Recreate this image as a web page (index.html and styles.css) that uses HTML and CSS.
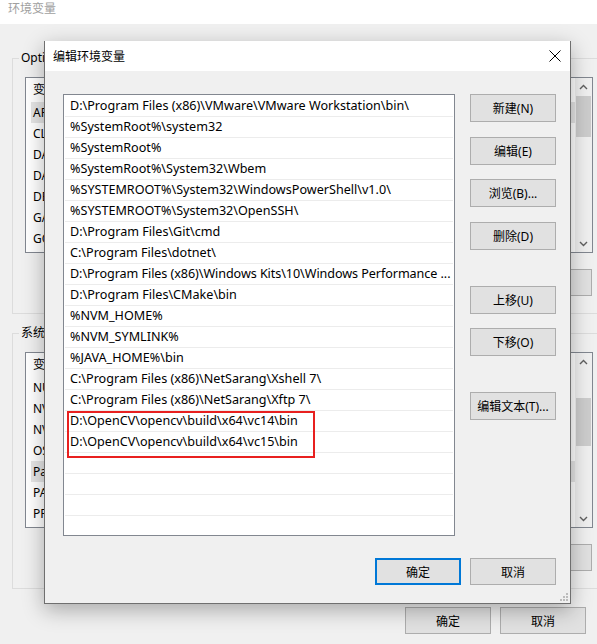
FILE: index.html
```html
<!DOCTYPE html>
<html lang="zh-CN">
<head>
    <meta charset="UTF-8">
    <title>环境变量</title>
    <link rel="stylesheet" href="styles.css">
</head>
<body>
    <!-- Hintergrundfenster: Umgebungsvariablen -->
    <div class="window">
        <div class="win-title">环境变量</div>

        <fieldset class="group">
            <legend>Options 的用户变量(U)</legend>
            <div class="var-list">
                <div class="var-rows">
                    <div class="var-head">变量</div>
                    <div class="var-row selected">APP_HOME</div>
                    <div class="var-row">CLASSPATH</div>
                    <div class="var-row">DART_HOME</div>
                    <div class="var-row">DATA_PATH</div>
                    <div class="var-row">DEV_HOME</div>
                    <div class="var-row">GATEWAY</div>
                    <div class="var-row">GOPATH</div>
                </div>
                <div class="scrollbar">
                    <div class="sb-arrow"><svg width="9" height="6" viewBox="0 0 9 6"><polyline points="1,5 4.5,1.5 8,5" /></svg></div>
                    <div class="sb-track"><div class="sb-thumb" style="margin-top: 1px; height: 41px;"></div></div>
                    <div class="sb-arrow"><svg width="9" height="6" viewBox="0 0 9 6"><polyline points="1,1 4.5,4.5 8,1" /></svg></div>
                </div>
            </div>
            <div class="group-buttons">
                <button>新建(N)...</button>
                <button>编辑(E)...</button>
                <button>删除(D)</button>
            </div>
        </fieldset>

        <fieldset class="group second">
            <legend>系统变量(S)</legend>
            <div class="var-list">
                <div class="var-rows">
                    <div class="var-head">变量</div>
                    <div class="var-row">NUMBER_OF_PROCESSORS</div>
                    <div class="var-row">NVM_HOME</div>
                    <div class="var-row">NVM_SYMLINK</div>
                    <div class="var-row">OS</div>
                    <div class="var-row selected">Path</div>
                    <div class="var-row">PATHEXT</div>
                    <div class="var-row">PROCESSOR_ARCHITECTURE</div>
                </div>
                <div class="scrollbar">
                    <div class="sb-arrow"><svg width="9" height="6" viewBox="0 0 9 6"><polyline points="1,5 4.5,1.5 8,5" /></svg></div>
                    <div class="sb-track"><div class="sb-thumb" style="margin-top: 28px; height: 48px;"></div></div>
                    <div class="sb-arrow"><svg width="9" height="6" viewBox="0 0 9 6"><polyline points="1,1 4.5,4.5 8,1" /></svg></div>
                </div>
            </div>
            <div class="group-buttons">
                <button>新建(W)...</button>
                <button>编辑(I)...</button>
                <button>删除(L)</button>
            </div>
        </fieldset>

        <div class="win-footer">
            <button>确定</button>
            <button>取消</button>
        </div>
    </div>

    <!-- Dialog: Umgebungsvariable bearbeiten -->
    <div class="dialog">
        <div class="dlg-title">
            <span>编辑环境变量</span>
            <svg class="close" width="12" height="12" viewBox="0 0 12 12"><path d="M0.5 0.5 L11.5 11.5 M11.5 0.5 L0.5 11.5" /></svg>
        </div>
        <div class="dlg-body">
            <div class="path-list">
                <div class="path-row">D:\Program Files (x86)\VMware\VMware Workstation\bin\</div>
                <div class="path-row">%SystemRoot%\system32</div>
                <div class="path-row">%SystemRoot%</div>
                <div class="path-row">%SystemRoot%\System32\Wbem</div>
                <div class="path-row">%SYSTEMROOT%\System32\WindowsPowerShell\v1.0\</div>
                <div class="path-row">%SYSTEMROOT%\System32\OpenSSH\</div>
                <div class="path-row">D:\Program Files\Git\cmd</div>
                <div class="path-row">C:\Program Files\dotnet\</div>
                <div class="path-row narrow">D:\Program Files (x86)\Windows Kits\10\Windows Performance ...</div>
                <div class="path-row">D:\Program Files\CMake\bin</div>
                <div class="path-row">%NVM_HOME%</div>
                <div class="path-row">%NVM_SYMLINK%</div>
                <div class="path-row">%JAVA_HOME%\bin</div>
                <div class="path-row">C:\Program Files (x86)\NetSarang\Xshell 7\</div>
                <div class="path-row">C:\Program Files (x86)\NetSarang\Xftp 7\</div>
                <div class="path-row">D:\OpenCV\opencv\build\x64\vc14\bin</div>
                <div class="path-row">D:\OpenCV\opencv\build\x64\vc15\bin</div>
                <div class="path-row"></div>
                <div class="path-row"></div>
                <div class="path-row"></div>
                <div class="mark"></div>
            </div>
            <div class="dlg-buttons">
                <button>新建(N)</button>
                <button>编辑(E)</button>
                <button>浏览(B)...</button>
                <button>删除(D)</button>
                <button class="spaced">上移(U)</button>
                <button>下移(O)</button>
                <button class="spaced">编辑文本(T)...</button>
            </div>
        </div>
        <div class="dlg-footer">
            <button class="default">确定</button>
            <button>取消</button>
        </div>
        <svg class="grip" width="8" height="8" viewBox="0 0 8 8">
            <rect x="6" y="0" width="2" height="2" />
            <rect x="3" y="3" width="2" height="2" />
            <rect x="6" y="3" width="2" height="2" />
            <rect x="0" y="6" width="2" height="2" />
            <rect x="3" y="6" width="2" height="2" />
            <rect x="6" y="6" width="2" height="2" />
        </svg>
    </div>
</body>
</html>
```

FILE: styles.css
```css
/* Grundlayout */
body {
    margin: 0;
    width: 597px;
    height: 644px;
    overflow: hidden;
    position: relative;
    background-color: #f0f0f0;
    color: #000;
    font-family: "Noto Sans", "Noto Sans CJK SC", sans-serif;
    font-size: 12px;
}

button {
    font-family: inherit;
    font-size: 12px;
    color: #000;
    background-color: #e1e1e1;
    border: 1px solid #adadad;
    width: 86px;
    height: 27px;
    padding: 0;
    box-sizing: border-box;
}

/* Hintergrundfenster */
.window {
    width: 597px;
    height: 644px;
    overflow: hidden;
}

.win-title {
    height: 24px;
    line-height: 17px;
    padding-left: 8px;
    background-color: #fff;
    color: #a0a0a0;
}

.group {
    margin: 26px 0 0 12px;
    padding: 11px 0 17px 12px;
    border: 1px solid #dcdcdc;
    width: 620px;
    box-sizing: border-box;
}

.group.second {
    margin-top: 11px;
}

.group legend {
    margin-left: -6px;
    padding: 0 2px;
    line-height: 16px;
}

.var-list {
    width: 568px;
    height: 176px;
    box-sizing: border-box;
    border: 1px solid #828790;
    background-color: #fff;
    display: flex;
    overflow: hidden;
}

.var-rows {
    flex: 1;
}

.var-head {
    height: 24px;
    line-height: 24px;
    padding-left: 7px;
}

.var-row {
    height: 21px;
    line-height: 21px;
    margin-left: 5px;
    padding-left: 2px;
    white-space: nowrap;
}

.var-row.selected {
    background-color: #e5e5e5;
}

.scrollbar {
    width: 17px;
    background-color: #f0f0f0;
    display: flex;
    flex-direction: column;
}

.sb-arrow {
    height: 17px;
    display: flex;
    align-items: center;
    justify-content: center;
}

.sb-arrow polyline {
    fill: none;
    stroke: #606060;
    stroke-width: 1.4;
}

.sb-track {
    flex: 1;
}

.sb-thumb {
    margin: 0 1px;
    background-color: #cdcdcd;
}

.group-buttons {
    width: 567px;
    margin-top: 16px;
    display: flex;
    justify-content: flex-end;
    gap: 9px;
}

.win-footer {
    width: 586px;
    margin-top: 18px;
    display: flex;
    justify-content: flex-end;
    gap: 9px;
}

/* Dialog */
.dialog {
    position: absolute;
    left: 44px;
    top: 41px;
    width: 527px;
    height: 563px;
    box-sizing: border-box;
    border: 1px solid #6f6f6f;
    background-color: #f0f0f0;
    box-shadow: 0 6px 20px rgba(0, 0, 0, 0.3);
}

.dlg-title {
    height: 30px;
    background-color: #fff;
    display: flex;
    align-items: center;
    justify-content: space-between;
    padding: 0 9px 0 8px;
    margin-top: -1px;
}

.close path {
    stroke: #000;
    stroke-width: 1;
    fill: none;
}

.dlg-body {
    display: flex;
    gap: 15px;
    padding: 23px 14px 0 18px;
}

.path-list {
    position: relative;
    width: 392px;
    height: 442px;
    box-sizing: border-box;
    border: 1px solid #828790;
    background-color: #fff;
    padding: 1px;
}

.path-row {
    height: 20px;
    line-height: 20px;
    border-bottom: 1px solid #ececec;
    padding-left: 5px;
    font-size: 12.6px;
    white-space: nowrap;
    overflow: hidden;
}

.path-row.narrow {
    letter-spacing: -0.07px;
}

/* rote Markierung ueber den OpenCV-Eintraegen */
.mark {
    position: absolute;
    left: 3px;
    top: 316px;
    width: 248px;
    height: 47px;
    box-sizing: border-box;
    border: 2px solid #e8201f;
}

.dlg-buttons {
    display: flex;
    flex-direction: column;
    gap: 14.5px;
}

.dlg-buttons button {
    height: 28px;
}

.dlg-buttons .spaced {
    margin-top: 21.5px;
}

.dlg-footer {
    display: flex;
    justify-content: flex-end;
    gap: 9px;
    padding-right: 14px;
    margin-top: 22px;
}

.dlg-footer .default {
    border: 2px solid #0078d7;
}

.grip {
    position: absolute;
    right: 2px;
    bottom: 2px;
    fill: #bcbcbc;
}
```
